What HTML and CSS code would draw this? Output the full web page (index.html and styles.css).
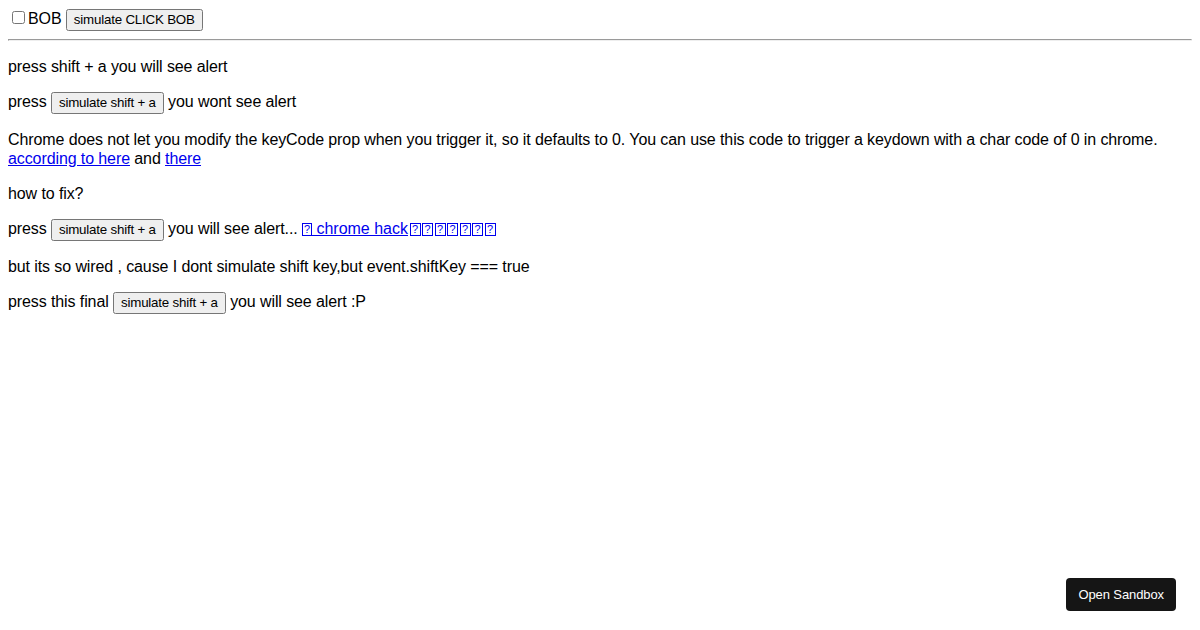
FILE: index.html
```html
<!DOCTYPE html>
<html>
<head>
<meta charset="utf-8">
<link rel="stylesheet" href="styles.css">
</head>
<body>
<div class="top">
  <label><input type="checkbox">BOB</label>
  <button>simulate CLICK BOB</button>
</div>
<hr>
<p>press shift + a you will see alert</p>
<p>press <button>simulate shift + a</button> you wont see alert</p>
<p>Chrome does not let you modify the keyCode prop when you trigger it, so it defaults to 0. You can use this code to trigger a keydown with a char code of 0 in chrome. <a href="#">according to here</a> and <a href="#">there</a></p>
<p>how to fix?</p>
<p>press <button>simulate shift + a</button> you will see alert... <a href="#" class="hack"><span class="tofu first">?</span> chrome hack<span class="tofu">?</span><span class="tofu">?</span><span class="tofu">?</span><span class="tofu">?</span><span class="tofu">?</span><span class="tofu">?</span><span class="tofu">?</span></a></p>
<p>but its so wired , cause I dont simulate shift key,but event.shiftKey === true</p>
<p>press this final <button>simulate shift + a</button> you will see alert :P</p>
<a class="sandbox" href="#">Open Sandbox</a>
</body>
</html>
```
FILE: styles.css
```css
body {
  font-family: "Liberation Sans", Arial, sans-serif;
  font-size: 16px;
  line-height: 19px;
  letter-spacing: -0.1px;
  color: #000;
  margin: 8px;
  background: #fff;
}
.top {
  line-height: 22px;
}
button {
  font-family: "Liberation Sans", Arial, sans-serif;
  font-size: 13.33px;
  letter-spacing: -0.2px;
  line-height: 16px;
  padding: 1px 6px;
}
a {
  color: #0000ee;
}
.hack {
  letter-spacing: 0;
}
.tofu {
  display: inline-block;
  box-sizing: border-box;
  width: 11px;
  height: 13px;
  margin-left: 1.5px;
  border: 1px solid currentColor;
  font-size: 11px;
  line-height: 11px;
  letter-spacing: 0;
  text-align: center;
  vertical-align: 1px;
}
.tofu.first {
  margin-left: 0;
  width: 10px;
}
.sandbox {
  position: fixed;
  right: 24px;
  bottom: 19px;
  background: #151515;
  color: #fff;
  text-decoration: none;
  font-size: 13px;
  letter-spacing: -0.1px;
  padding: 9px 12px 8px;
  border-radius: 4px;
  line-height: 16px;
}
```
